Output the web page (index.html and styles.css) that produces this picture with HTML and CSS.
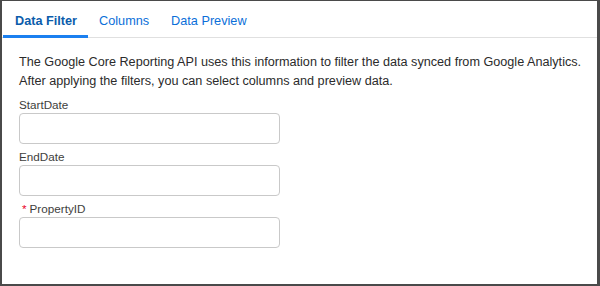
FILE: index.html
```html
<!DOCTYPE html>
<html lang="en">
<head>
    <meta charset="UTF-8">
    <title>Data Filter</title>
    <link rel="stylesheet" href="styles.css">
</head>
<body>
    <div id="panel">
        <div class="tabs">
            <a class="tab active">Data Filter</a>
            <a class="tab">Columns</a>
            <a class="tab">Data Preview</a>
        </div>

        <div class="content">
            <p class="intro">
                The Google Core Reporting API uses this information to filter the data synced from Google Analytics.
                After applying the filters, you can select columns and preview data.
            </p>

            <div class="field">
                <label>StartDate</label>
                <input type="text">
            </div>

            <div class="field">
                <label>EndDate</label>
                <input type="text">
            </div>

            <div class="field">
                <label><span class="required">*</span>PropertyID</label>
                <input type="text">
            </div>
        </div>
    </div>
</body>
</html>
```

FILE: styles.css
```css
body {
    margin: 0;
    padding: 0;
    background-color: #ffffff;
    font-family: "Liberation Sans", Arial, sans-serif;
}

#panel {
    box-sizing: border-box;
    width: 600px;
    height: 286px;
    border-top: 1px solid #4a4a4a;
    border-left: 2px solid #4a4a4a;
    border-right: 3px solid #4a4a4a;
    border-bottom: 2px solid #4a4a4a;
    background-color: #ffffff;
}

.tabs {
    display: flex;
    padding-left: 1px;
    border-bottom: 1px solid #e0e0e0;
}

.tab {
    padding: 2px 11px 0 11px;
    height: 33px;
    line-height: 36px;
    font-size: 12.7px;
    color: #0b6fd9;
    border-bottom: 2px solid transparent;
    margin-bottom: -1px;
}

.tab:first-child {
    padding-left: 12px;
}

.tab.active {
    font-weight: bold;
    color: #0b5cab;
    border-bottom: 3px solid #1b80f0;
    height: 32px;
}

.content {
    padding: 15px 0 0 17px;
}

.intro {
    margin: 0 0 5px 0;
    font-size: 12.65px;
    line-height: 19px;
    color: #2b2b2b;
}

.field {
    display: flex;
    flex-direction: column;
    margin-bottom: 4px;
}

.field label {
    font-size: 11.7px;
    line-height: 17px;
    color: #3e3e3c;
}

.required {
    color: #ea001e;
    margin: 0 3px 0 3px;
}

.field input {
    box-sizing: border-box;
    width: 261px;
    height: 31px;
    border: 1px solid #c9c9c9;
    border-radius: 4px;
    margin: 0;
}
```
